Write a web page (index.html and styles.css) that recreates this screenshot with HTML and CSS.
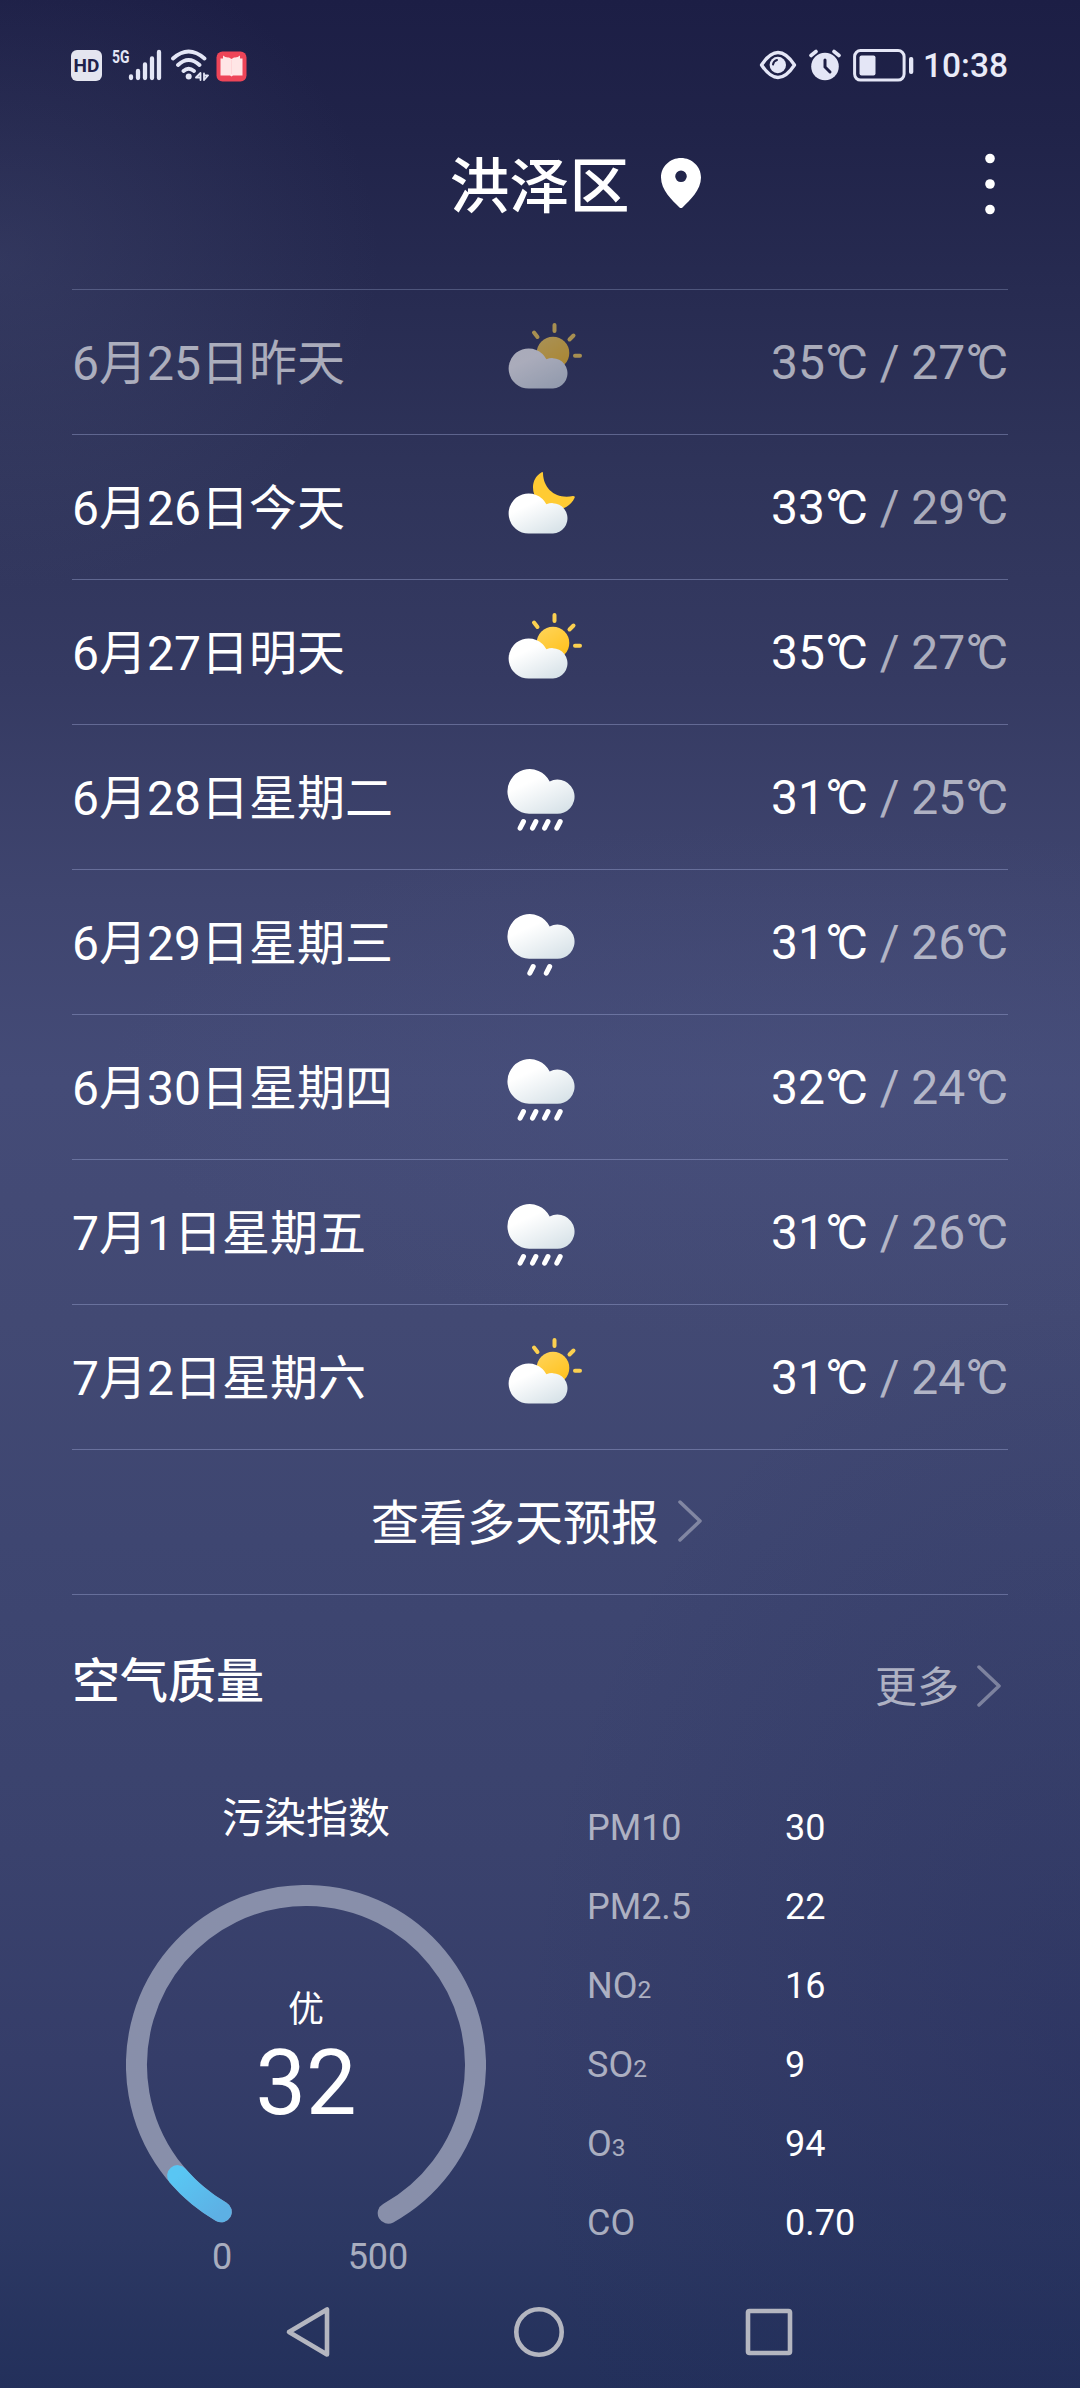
FILE: index.html
```html
<!DOCTYPE html>
<html lang="zh-CN">
<head>
<meta charset="utf-8">
<title>洪泽区天气</title>
<link rel="stylesheet" href="styles.css">
</head>
<body>
<svg class="defs" aria-hidden="true">
  <defs>
    <linearGradient id="cloudFill" x1="0.1" y1="0" x2="0.8" y2="1">
      <stop offset="0.3" stop-color="#fff"/>
      <stop offset="1" stop-color="#d7e2e8"/>
    </linearGradient>
    <linearGradient id="sunFill" x1="0" y1="0" x2="0.6" y2="1">
      <stop offset="0" stop-color="#ffd55c"/>
      <stop offset="1" stop-color="#ffc21f"/>
    </linearGradient>
    <symbol id="small-cloud" viewBox="0 0 84 84">
      <path fill="url(#cloudFill)" d="M31 68.5a20 20 0 1 1 17.4-29.2A15.2 15.2 0 1 1 55 68.5z"/>
    </symbol>
    <symbol id="big-cloud" viewBox="0 0 84 84">
      <path fill="url(#cloudFill)" d="M31.1 58.7a22.3 22.3 0 1 1 20.6-32.3A17.1 17.1 0 1 1 58.2 58.7z"/>
    </symbol>
    <symbol id="partly" viewBox="0 0 84 84">
      <circle cx="55" cy="33" r="16.3" fill="url(#sunFill)"/>
      <path d="M56.5 5v6M36 12.500l3.500 4.500M75.500 15.500l-4 4M77 35.700h5" fill="none" stroke="#fbd050" stroke-width="4" stroke-linecap="round"/>
      <use href="#small-cloud"/>
    </symbol>
    <symbol id="night" viewBox="0 0 84 84">
      <path fill="#ffcb33" d="M43 7.800Q45 6 45 8.500C45.500 24 58 34.500 75 31Q77.500 31 76.500 33C70 47 50 49 40 36C32 26 34 13 43 7.800z"/>
      <use href="#small-cloud"/>
    </symbol>
    <symbol id="rain" viewBox="0 0 84 84">
      <use href="#big-cloud"/>
      <path d="M25.500 66.500l-3.400 6.700M37.900 66.500l-3.400 6.700M50 66.500l-3.400 6.700M62.200 66.500l-3.400 6.700" stroke="#fff" stroke-width="5" stroke-linecap="round"/>
    </symbol>
    <symbol id="drizzle" viewBox="0 0 84 84">
      <use href="#big-cloud"/>
      <path d="M35.200 66.500l-3.400 6.700M51.700 66.500l-3.400 6.700" stroke="#fff" stroke-width="5" stroke-linecap="round"/>
    </symbol>
  </defs>
</svg>

<div class="screen">
  <div class="status">
    <div class="status-left">
      <span class="hd">HD</span>
      <span class="net">5G</span>
      <svg class="signal" width="34" height="32" viewBox="0 0 34 32"><path d="M3 27.500v1.500M10 22v7M17 15.500v13.500M24 9.500v19.500M31 3v26" stroke="#e4e6f6" stroke-width="4.300" stroke-linecap="round"/></svg>
      <svg class="wifi" width="40" height="32" viewBox="0 0 40 32" fill="none" stroke="#e4e6f6" stroke-width="3.800" stroke-linecap="round"><path d="M3 9.500Q18.500-4.500 34.500 9.500M8 16Q18.500 6 29.500 16M13.500 22Q18.500 17.500 24 22"/><circle cx="18.700" cy="27.500" r="3" fill="#e4e6f6" stroke="none"/><path d="M30.500 24v7l0-7-4.500 4.500h4M34 31v-6.500M34 31l4-4.500h-3.500" stroke-width="1.800" stroke-linejoin="round"/></svg>
      <svg class="book" width="31" height="31" viewBox="0 0 31 31"><rect x=".5" y=".5" width="30" height="30" rx="6" fill="#ee4558"/><path d="M4.500 7.500H7V4.500Q9.500 7 13 6.500L15.500 8L18 6.500Q21.500 7 24 4.500V7.500H26.500V24.500H17L15.500 25.500L14 24.500H4.500z" fill="#ffe6e6"/><path d="M15.500 9v14" stroke="#ffd6d8" stroke-width="1"/></svg>
    </div>
    <div class="status-right">
      <svg class="eye" width="38" height="30" viewBox="0 0 38 30"><path d="M2.500 15Q19-10 35.500 15Q19 40 2.500 15z" fill="none" stroke="#e4e6f6" stroke-width="3.300" stroke-linejoin="round"/><circle cx="18.800" cy="15" r="8.200" fill="#e4e6f6"/><path d="M14 14.500q.5-3.500 4-4.500" fill="none" stroke="#1e1f45" stroke-width="2" stroke-linecap="round"/></svg>
      <svg class="alarm" width="34" height="32" viewBox="0 0 34 32"><circle cx="17" cy="17.500" r="13.800" fill="#e4e6f6"/><path d="M3 6.500l5-4M31 6.500l-5-4" stroke="#e4e6f6" stroke-width="3.600" stroke-linecap="round"/><path d="M17 11v7l5 5" fill="none" stroke="#1e1f45" stroke-width="3" stroke-linecap="round"/></svg>
      <svg class="battery" width="61" height="33" viewBox="0 0 61 33"><rect x="1.600" y="1.600" width="49.500" height="29.500" rx="6" fill="none" stroke="#e4e6f6" stroke-width="3"/><rect x="6.500" y="6.500" width="16" height="20" rx="2" fill="#e4e6f6"/><rect x="56" y="8" width="4.300" height="17" rx="2" fill="#e4e6f6"/></svg>
      <span class="clock">10:38</span>
    </div>
  </div>

  <header class="header">
    <div class="place"><h1>洪泽区</h1>
      <svg width="40" height="50" viewBox="0 0 40 50"><path fill="#fff" fill-rule="evenodd" d="M20 0C9 0 0 8.500 0 19.500C0 32 11 42 18.500 49.500Q20 50.500 21.500 49.500C29 42 40 32 40 19.500C40 8.500 31 0 20 0zM20 12.500a5.800 5.800 0 1 0 0 11.600a5.800 5.800 0 0 0 0-11.600z"/></svg>
    </div>
    <svg class="more-menu" width="10" height="62" viewBox="0 0 10 62" fill="#fff"><circle cx="5" cy="5.500" r="4.800"/><circle cx="5" cy="31" r="4.800"/><circle cx="5" cy="56.500" r="4.800"/></svg>
  </header>

  <main class="content">
    <ul class="days">
      <li class="day past"><span class="date">6月25日昨天</span><svg class="wx"><use href="#partly"/></svg><span class="temp"><b>35<i>°</i>C</b> / 27<i>°</i>C</span></li>
      <li class="day"><span class="date">6月26日今天</span><svg class="wx"><use href="#night"/></svg><span class="temp"><b>33<i>°</i>C</b> / 29<i>°</i>C</span></li>
      <li class="day"><span class="date">6月27日明天</span><svg class="wx"><use href="#partly"/></svg><span class="temp"><b>35<i>°</i>C</b> / 27<i>°</i>C</span></li>
      <li class="day"><span class="date">6月28日星期二</span><svg class="wx"><use href="#rain"/></svg><span class="temp"><b>31<i>°</i>C</b> / 25<i>°</i>C</span></li>
      <li class="day"><span class="date">6月29日星期三</span><svg class="wx"><use href="#drizzle"/></svg><span class="temp"><b>31<i>°</i>C</b> / 26<i>°</i>C</span></li>
      <li class="day"><span class="date">6月30日星期四</span><svg class="wx"><use href="#rain"/></svg><span class="temp"><b>32<i>°</i>C</b> / 24<i>°</i>C</span></li>
      <li class="day"><span class="date">7月1日星期五</span><svg class="wx"><use href="#rain"/></svg><span class="temp"><b>31<i>°</i>C</b> / 26<i>°</i>C</span></li>
      <li class="day"><span class="date">7月2日星期六</span><svg class="wx"><use href="#partly"/></svg><span class="temp"><b>31<i>°</i>C</b> / 24<i>°</i>C</span></li>
    </ul>
    <a class="forecast"><span>查看多天预报</span><svg class="chevron" width="24" height="42" viewBox="0 0 24 42"><path d="M2 2l20 19L2 40"/></svg></a>

    <section class="air">
      <div class="air-head">
        <h2>空气质量</h2>
        <a class="more"><span>更多</span><svg class="chevron" width="24" height="42" viewBox="0 0 24 42"><path d="M2 2l20 19L2 40"/></svg></a>
      </div>
      <div class="air-body">
        <div class="index">
          <h3>污染指数</h3>
          <div class="gauge">
            <svg class="ring" width="360" height="360" viewBox="0 0 360 360" fill="none" stroke-width="21" stroke-linecap="round">
              <defs><linearGradient id="level" x1="0" y1="0" x2="1" y2="1"><stop offset="0" stop-color="#59c6f3"/><stop offset="1" stop-color="#5db0e4"/></linearGradient></defs>
              <path d="M95.300 326.800A169.500 169.500 0 1 1 262.200 328.200" stroke="#888faa"/>
              <path d="M95.300 326.800A169.500 169.500 0 0 1 51.600 290.600" stroke="url(#level)"/>
            </svg>
            <div class="reading"><span class="grade">优</span><span class="value">32</span></div>
          </div>
          <div class="scale"><span>0</span><span>500</span></div>
        </div>
        <dl class="pollutants">
          <dt>PM10</dt><dd>30</dd>
          <dt>PM2.5</dt><dd>22</dd>
          <dt>NO<small>2</small></dt><dd>16</dd>
          <dt>SO<small>2</small></dt><dd>9</dd>
          <dt>O<small>3</small></dt><dd>94</dd>
          <dt>CO</dt><dd>0.70</dd>
        </dl>
      </div>
    </section>
  </main>

  <nav class="nav">
    <svg width="50" height="54" viewBox="0 0 50 54"><path d="M5 27L43 4.500V49.500z"/></svg>
    <svg width="54" height="54" viewBox="0 0 54 54"><circle cx="27" cy="27" r="22.700"/></svg>
    <svg width="50" height="54" viewBox="0 0 50 54"><rect x="4" y="6" width="42" height="42" rx="1.500"/></svg>
  </nav>
</div>
</body>
</html>
```

FILE: styles.css
```css
* { box-sizing: border-box; margin: 0; padding: 0; }
body {
  font-family: Roboto, "Noto Sans CJK SC", sans-serif;
  color: #fff;
  background: #353b64;
}
.defs { position: absolute; width: 0; height: 0; }
svg { display: block; flex: none; }
.screen {
  display: flex;
  flex-direction: column;
  width: 1080px;
  height: 2388px;
  overflow: hidden;
  background:
    radial-gradient(ellipse 380px 330px at 0 260px, rgba(84, 92, 132, .27), transparent),
    radial-gradient(ellipse 560px 760px at 1080px 2060px, rgba(30, 38, 84, .3), transparent),
    radial-gradient(ellipse 700px 260px at 800px 1080px, rgba(84, 94, 142, .2), transparent),
    linear-gradient(#1c1e45 0, #202349 130px, #272b51 290px, #2f345a 480px, #353a62 680px, #3f456f 900px, #444b77 1080px, #424973 1320px, #3e4671 1540px, #3a426d 1850px, #353d69 2060px, #2c3863 2240px, #23305b 2388px);
}

.status {
  display: flex;
  justify-content: space-between;
  height: 100px;
  padding: 49px 72px 0 70px;
}
.status-left, .status-right { display: flex; align-items: flex-start; }
.hd {
  width: 31px;
  height: 31px;
  margin: 1px 0 0 1px;
  border-radius: 6px;
  background: #e4e5ef;
  color: #20214a;
  font: 700 19px/31px Roboto, sans-serif;
  text-align: center;
}
.net {
  width: 17px;
  margin-left: 10px;
  font: 700 18.500px/16px Roboto, sans-serif;
  color: #e4e6f6;
  transform: scaleX(.75);
  transform-origin: 0 0;
}
.signal { margin-left: -1px; }
.wifi { margin-left: 8px; }
.book { margin: 2px 0 0 6px; }
.eye { margin-top: 1px; }
.alarm { margin-left: 11px; }
.battery { margin-left: 11px; }
.clock { margin-left: 9px; font: 500 33.500px/34px Roboto, sans-serif; color: #e9ebf8; }

.header {
  display: grid;
  grid-template-columns: 1fr auto 1fr;
  align-items: center;
  height: 189px;
  padding: 0 85px 22px 142px;
}
.place { grid-column: 2; display: flex; align-items: center; gap: 31px; margin-left: 13px; }
h1 { margin-top: 8px; font-size: 60px; line-height: 80px; font-weight: 500; }
.place svg { margin-bottom: 1px; }
.more-menu { justify-self: end; }

.content { padding: 0 72px; }
.days { list-style: none; border-top: 1px solid rgba(150, 160, 200, .36); }
.day, .forecast { border-bottom: 1px solid rgba(160, 170, 215, .42); height: 145px; }
.day {
  display: grid;
  grid-template-columns: 1fr 84px 1fr;
  align-items: center;
  font-size: 48px;
  line-height: 60px;
}
.wx { width: 84px; height: 84px; }
.date, .forecast span { padding-top: 3px; }
.temp { padding-top: 2px; }
.past > * { opacity: .6; }
.temp { justify-self: end; color: rgba(255, 255, 255, .6); white-space: nowrap; }
.temp b { font-weight: 400; color: #fff; }
.temp i { font-style: normal; letter-spacing: -6.500px; }
.past .temp { color: #fff; }

.forecast {
  display: flex;
  align-items: center;
  justify-content: center;
  gap: 19px;
  padding-right: 7px;
  font-size: 48px;
  line-height: 60px;
}
.chevron { fill: none; stroke: rgba(255, 255, 255, .35); stroke-width: 3.500; stroke-linecap: round; stroke-linejoin: round; }
.forecast .chevron { margin-bottom: 2px; }

.air-head { display: flex; justify-content: space-between; align-items: flex-start; height: 192px; padding: 57px 7px 0 0; }
h2 { font-size: 48px; line-height: 60px; font-weight: 500; }
.more { display: flex; align-items: center; gap: 18px; margin-top: 4px; font-size: 42px; line-height: 60px; color: rgba(255, 255, 255, .6); }
.more span { padding-top: 2px; }
.more .chevron { margin-bottom: 2px; }

.air-body { display: grid; grid-template-columns: 468px 1fr; }
.index { padding: 0 0 0 54px; }
h3 { width: 360px; padding-top: 1px; font-size: 42px; line-height: 61px; font-weight: 400; text-align: center; }
.gauge { display: grid; width: 360px; height: 360px; margin-top: 36px; }
.ring, .reading { grid-area: 1 / 1; }
.reading { display: flex; flex-direction: column; align-items: center; padding-top: 100px; }
.grade { font-size: 36px; line-height: 50px; }
.value { font-size: 90px; line-height: 97px; }
.scale { display: flex; width: 360px; font-size: 36px; line-height: 44px; margin-top: -10px; color: rgba(255, 255, 255, .6); }
.scale span { width: 156px; text-align: center; }
.scale span:first-child { margin-left: 18px; }

.pollutants {
  display: grid;
  grid-template-columns: 198px 1fr;
  grid-auto-rows: 79px;
  margin-top: 2px;
  padding-left: 47px;
  font-size: 36px;
  line-height: 79px;
}
dt { color: rgba(255, 255, 255, .6); }
dt small { font-size: 24.500px; }

.nav {
  display: flex;
  justify-content: space-between;
  margin-top: auto;
  padding: 0 286px 29px 284px;
}
.nav svg { fill: none; stroke: #b4b6c0; stroke-width: 4.600; stroke-linejoin: round; }
```
